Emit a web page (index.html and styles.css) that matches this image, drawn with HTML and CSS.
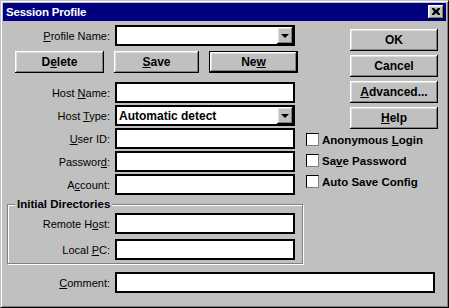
FILE: index.html
```html
<!DOCTYPE html>
<html lang="en">
<head>
    <meta charset="UTF-8">
    <title>Session Profile</title>
    <link rel="stylesheet" href="styles.css">
</head>
<body>
    <div class="window">
        <div class="titlebar">
            <span class="title">Session Profile</span>
            <button class="close-btn" aria-label="Close">
                <svg width="8" height="7" viewBox="0 0 8 7">
                    <path d="M0 0h2l2 2 2-2h2v1L6 3.5 8 6v1H6L4 5 2 7H0V6l2-2.5L0 1z" fill="#000"/>
                </svg>
            </button>
        </div>

        <div class="client">
            <div class="main">
                <div class="left">
                    <div class="field">
                        <label><u>P</u>rofile Name:</label>
                        <div class="combo">
                            <span class="combo-text"></span>
                            <span class="drop-btn"><i class="arrow"></i></span>
                        </div>
                    </div>

                    <div class="actions">
                        <button class="btn btn-delete">D<u>e</u>lete</button>
                        <button class="btn btn-save"><u>S</u>ave</button>
                        <button class="btn btn-new default">Ne<u>w</u></button>
                    </div>

                    <div class="fields">
                        <div class="field">
                            <label>Host <u>N</u>ame:</label>
                            <div class="input"></div>
                        </div>
                        <div class="field">
                            <label>Host <u>T</u>ype:</label>
                            <div class="combo">
                                <span class="combo-text">Automatic detect</span>
                                <span class="drop-btn"><i class="arrow"></i></span>
                            </div>
                        </div>
                        <div class="field">
                            <label><u>U</u>ser ID:</label>
                            <div class="input"></div>
                        </div>
                        <div class="field">
                            <label>Passwor<u>d</u>:</label>
                            <div class="input"></div>
                        </div>
                        <div class="field">
                            <label>A<u>c</u>count:</label>
                            <div class="input"></div>
                        </div>
                    </div>

                    <fieldset class="group">
                        <legend>Initial Directories</legend>
                        <div class="field">
                            <label>Remote H<u>o</u>st:</label>
                            <div class="input"></div>
                        </div>
                        <div class="field">
                            <label>Local <u>P</u>C:</label>
                            <div class="input"></div>
                        </div>
                    </fieldset>
                </div>

                <div class="right">
                    <div class="side-buttons">
                        <button class="btn">OK</button>
                        <button class="btn">Cancel</button>
                        <button class="btn"><u>A</u>dvanced...</button>
                        <button class="btn"><u>H</u>elp</button>
                    </div>
                    <div class="checks">
                        <label class="check"><span class="box"></span><span>Anonymous <u>L</u>ogin</span></label>
                        <label class="check"><span class="box"></span><span>Sa<u>v</u>e Password</span></label>
                        <label class="check"><span class="box"></span><span>Auto Save Config</span></label>
                    </div>
                </div>
            </div>

            <div class="field comment">
                <label><u>C</u>omment:</label>
                <div class="input"></div>
            </div>
        </div>
    </div>
</body>
</html>
```

FILE: styles.css
```css
/* general */
body {
    margin: 0;
    background-color: #c0c0c0;
    font-family: "Liberation Sans", Arial, sans-serif;
    font-size: 11px;
    color: #000;
}

u {
    text-decoration-thickness: 1px;
    text-underline-offset: 1px;
}

/* window frame */
.window {
    width: 449px;
    height: 308px;
    box-sizing: border-box;
    background-color: #c0c0c0;
    border: 1px solid;
    border-color: #c0c0c0 #000 #000 #c0c0c0;
    box-shadow: inset 1px 1px #fff, inset -1px -1px #808080;
    padding: 2px;
}

.titlebar {
    height: 18px;
    background-color: #000080;
    color: #fff;
    display: flex;
    align-items: center;
    justify-content: space-between;
    padding: 0 2px 0 3px;
}

.title {
    font-weight: bold;
    font-size: 11.5px;
    letter-spacing: -0.2px;
}

.close-btn {
    width: 16px;
    height: 14px;
    padding: 0;
    border: none;
    background-color: #c0c0c0;
    box-shadow: inset -1px -1px #000, inset 1px 1px #fff, inset -2px -2px #808080, inset 2px 2px #dfdfdf;
    display: flex;
    align-items: center;
    justify-content: center;
}

.close-btn svg {
    margin: 0 0 1px 0;
}

/* client area */
.client {
    padding-top: 4px;
}

.main {
    display: flex;
    gap: 3px;
}

.left {
    width: 300px;
    flex: none;
}

.field {
    display: grid;
    grid-template-columns: 107px 180px;
    column-gap: 5px;
    align-items: center;
    height: 21px;
}

.field label {
    text-align: right;
    white-space: nowrap;
}

.input,
.combo {
    height: 21px;
    box-sizing: border-box;
    background-color: #fff;
    border: 2px solid #000;
    border-width: 2px 2px 2px 2px;
}

.combo {
    display: flex;
    align-items: center;
}

.combo-text {
    flex: 1;
    padding-left: 2px;
    font-weight: bold;
    font-size: 12px;
}

.drop-btn {
    width: 16px;
    height: 17px;
    background-color: #c0c0c0;
    box-shadow: inset -1px -1px #000, inset 1px 1px #fff, inset -2px -2px #808080, inset 2px 2px #dfdfdf;
    display: flex;
    align-items: center;
    justify-content: center;
}

.arrow {
    width: 0;
    height: 0;
    border-left: 4px solid transparent;
    border-right: 4px solid transparent;
    border-top: 4px solid #000;
    margin-left: -1px;
}

/* buttons */
.btn {
    height: 22px;
    width: 88px;
    padding: 0;
    border: none;
    background-color: #c0c0c0;
    box-shadow: inset -1px -1px #000, inset 1px 1px #fff, inset -2px -2px #808080, inset 2px 2px #dfdfdf;
    font-family: "Liberation Sans", Arial, sans-serif;
    font-weight: bold;
    font-size: 12px;
    color: #000;
}

.btn.default {
    border: 1px solid #000;
}

.actions {
    display: flex;
    gap: 10px;
    padding-left: 12px;
    margin-top: 5px;
    margin-bottom: 9px;
}

.actions .btn-delete {
    width: 89px;
}

.actions .btn-save {
    width: 85px;
}

.actions .btn-new {
    width: 89px;
}

.fields {
    display: flex;
    flex-direction: column;
    gap: 2px;
}

/* group box */
.group {
    margin: 3px 0 0 4px;
    width: 296px;
    box-sizing: border-box;
    padding: 2px 7px 3px 2px;
    border: 1px solid #808080;
    box-shadow: 1px 1px 0 #fff, inset 1px 1px 0 #fff;
    display: flex;
    flex-direction: column;
    gap: 5px;
}

.group legend {
    font-weight: bold;
    font-size: 11.5px;
    line-height: 13px;
    padding: 0 2px;
    margin-left: 5px;
    background-color: #c0c0c0;
}

.group .field {
    grid-template-columns: 100px 180px;
}

/* right column */
.right {
    padding-top: 4px;
}

.side-buttons {
    display: flex;
    flex-direction: column;
    gap: 4px;
    padding-left: 44px;
}

.checks {
    display: flex;
    flex-direction: column;
}

.check {
    display: flex;
    align-items: center;
    height: 21px;
    gap: 3px;
    font-weight: bold;
    font-size: 11.5px;
    white-space: nowrap;
}

.box {
    width: 13px;
    height: 13px;
    box-sizing: border-box;
    background-color: #fff;
    border: 1px solid;
    border-color: #000 #808080 #808080 #000;
}

/* comment row */
.comment {
    margin-top: 8px;
    grid-template-columns: 107px 320px;
}
```
